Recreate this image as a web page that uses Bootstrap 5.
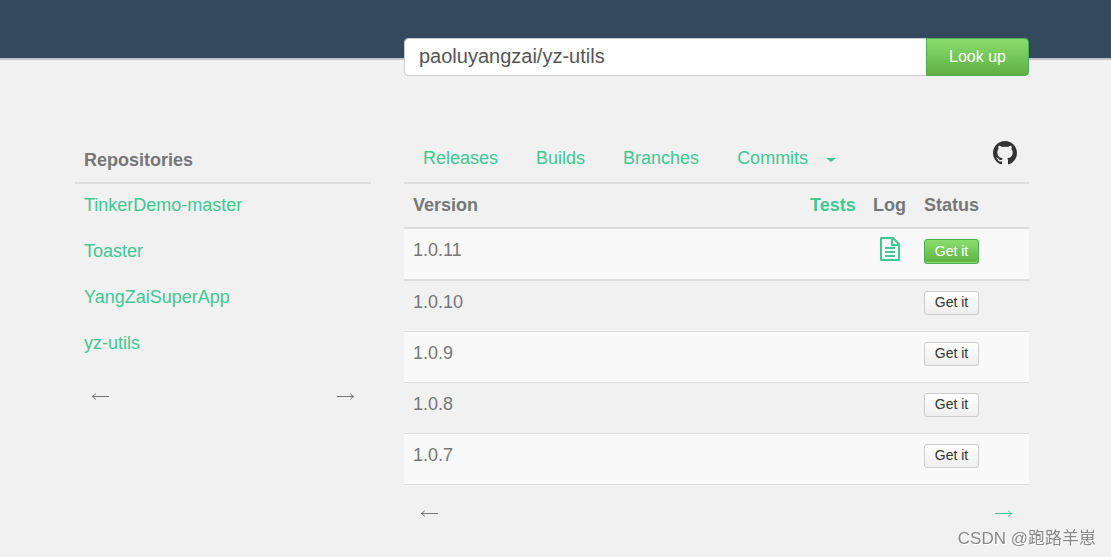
<!DOCTYPE html>
<html lang="en">
<head>
<meta charset="utf-8">
<meta name="viewport" content="width=device-width, initial-scale=1">
<title>paoluyangzai/yz-utils</title>
<link href="https://cdn.jsdelivr.net/npm/bootstrap@5.3.0/dist/css/bootstrap.min.css" rel="stylesheet">
<style>
  body { background: #f1f1f1; color: #777; font-family: "Liberation Sans", "Noto Sans CJK SC", sans-serif; font-size: 18px; line-height: 26px; }
  a { color: #41c793; text-decoration: none; }
  a:hover { color: #2a9d6f; }
  .topbar { height: 60px; background: #34495e; border-bottom: 2px solid #bdc3c7; }
  .page { padding: 0 82px 0 75px; }
  .columns { display: grid; grid-template-columns: 296fr 625fr; column-gap: 33px; }
  .lookup { grid-column: 2; margin-top: -22px; margin-bottom: 64px; }
  .lookup .form-control { height: 38px; padding: 0 14px 2px; font-size: 20px; color: #555; border-color: #ccc; border-radius: 4px; }
  .lookup .btn { width: 103px; height: 38px; padding: 0; font-size: 16px; border-radius: 4px; }
  .btn-go, .btn-go:hover { color: #fff; background: linear-gradient(#8add6d, #60b044); border-color: #4cae4c; }
  .btn-get { width: 55px; height: 24px; padding: 0 0 2px; font-size: 14px; line-height: 20px; border-radius: 3px; }
  .btn-go.btn-get { height: 25px; box-shadow: inset 0 -1px #8add6d; }
  .btn-plain, .btn-plain:hover { color: #333; background: linear-gradient(#fff, #eee); border-color: #ccc; }
  .heading { height: 44px; padding: 7px 9px; border-bottom: 2px solid #ddd; font-size: 18px; line-height: 26px; font-weight: 700; }
  .tabs { height: 44px; border-bottom: 2px solid #ddd; }
  .tabs .nav-link { color: #41c793; padding: 5px 19px; }
  .tabs .dropdown-toggle::after { margin-left: 18px; vertical-align: 2px; border-top-width: 4px; border-left-width: 5px; border-right-width: 5px; border-bottom: 0; }
  .repos li { height: 46px; padding: 8px 9px; }
  .versions { table-layout: fixed; width: 100%; }
  .versions th { height: 44px; padding: 8px 9px; border-bottom: 2px solid #ddd; vertical-align: top; }
  .versions td { height: 51px; padding: 8px 9px; border-bottom: 1px solid #ddd; vertical-align: top; }
  .versions .latest td { height: 52px; border-bottom-width: 2px; }
  .versions tbody tr:nth-child(odd) { background: #f9f9f9; }
  .versions td.icon-cell { padding-left: 15px; }
  .versions .btn-get { margin-top: 2px; }
  .col-tests { width: 63px; } .col-log { width: 51px; } .col-status { width: 114px; }
  .pager-row { padding: 24px 16px 0; }
  .pager-row svg { display: block; fill: none; stroke: currentColor; }
  .watermark { right: 15px; bottom: 5px; color: #888; text-shadow: 1px 1px #fff; font-size: 17px; }
</style>
</head>
<body>
<svg class="d-none">
  <symbol id="arrow-left" viewBox="0 0 18 8"><path d="M1 4.5H18M4.500 1.500Q3.500 4 1 4.500Q3.500 5 4.500 7.500"/></symbol>
  <symbol id="arrow-right" viewBox="0 0 18 8"><path d="M0 4.500H17M13.500 1.500Q14.500 4 17 4.500Q14.500 5 13.500 7.500"/></symbol>
</svg>
<header class="topbar"></header>
<main class="page">
  <div class="columns">
    <form class="lookup input-group position-relative">
      <input type="text" class="form-control shadow-none" aria-label="Repository" value="paoluyangzai/yz-utils">
      <button type="button" class="btn btn-go">Look up</button>
    </form>
    <aside>
      <h2 class="heading m-0">Repositories</h2>
      <ul class="repos list-unstyled mb-0">
        <li><a href="#">TinkerDemo-master</a></li>
        <li><a href="#">Toaster</a></li>
        <li><a href="#">YangZaiSuperApp</a></li>
        <li><a href="#">yz-utils</a></li>
      </ul>
      <div class="pager-row d-flex justify-content-between">
        <svg width="18" height="8"><use href="#arrow-left"/></svg>
        <svg width="18" height="8"><use href="#arrow-right"/></svg>
      </div>
    </aside>
    <section>
      <nav class="tabs nav">
        <a class="nav-link" href="#">Releases</a>
        <a class="nav-link" href="#">Builds</a>
        <a class="nav-link" href="#">Branches</a>
        <a class="nav-link dropdown-toggle" href="#">Commits</a>
        <a class="ms-auto me-2 pe-1" href="#" aria-label="GitHub">
          <svg class="d-block" width="24" height="25" viewBox="0 -.5 16 16.500" fill="#333"><path d="M8 0C3.58 0 0 3.58 0 8c0 3.54 2.29 6.53 5.47 7.59.4.07.55-.17.55-.38 0-.19-.01-.82-.01-1.49-2.01.37-2.53-.49-2.69-.94-.09-.23-.48-.94-.82-1.13-.28-.15-.68-.52-.01-.53.63-.01 1.08.58 1.23.82.72 1.21 1.87.87 2.33.66.07-.52.28-.87.51-1.07-1.78-.2-3.64-.89-3.64-3.95 0-.87.31-1.59.82-2.15-.08-.2-.36-1.02.08-2.12 0 0 .67-.21 2.2.82.64-.18 1.32-.27 2-.27s1.36.09 2 .27c1.53-1.04 2.2-.82 2.2-.82.44 1.1.16 1.92.08 2.12.51.56.82 1.27.82 2.15 0 3.07-1.87 3.75-3.65 3.95.29.25.54.73.54 1.48 0 1.07-.01 1.93-.01 2.2 0 .21.15.46.55.38A8.01 8.01 0 0 0 16 8c0-4.42-3.58-8-8-8z"/></svg>
        </a>
      </nav>
      <table class="versions">
        <colgroup><col><col class="col-tests"><col class="col-log"><col class="col-status"></colgroup>
        <thead><tr><th>Version</th><th><a href="#">Tests</a></th><th>Log</th><th>Status</th></tr></thead>
        <tbody>
          <tr class="latest"><td>1.0.11</td><td></td>
            <td class="icon-cell"><a href="#" aria-label="Build log"><svg class="d-block" width="22" height="24" viewBox="0 0 22 24" fill="none" stroke="#41c793" stroke-width="2"><path d="M2 1h12l6 6v16H2zM13 1v7h7M6 11h10M6 15h10M6 19h10" stroke-linejoin="round"/></svg></a></td>
            <td><button type="button" class="btn btn-go btn-get d-block">Get it</button></td></tr>
          <tr><td>1.0.10</td><td></td><td></td><td><button type="button" class="btn btn-plain btn-get d-block">Get it</button></td></tr>
          <tr><td>1.0.9</td><td></td><td></td><td><button type="button" class="btn btn-plain btn-get d-block">Get it</button></td></tr>
          <tr><td>1.0.8</td><td></td><td></td><td><button type="button" class="btn btn-plain btn-get d-block">Get it</button></td></tr>
          <tr><td>1.0.7</td><td></td><td></td><td><button type="button" class="btn btn-plain btn-get d-block">Get it</button></td></tr>
        </tbody>
      </table>
      <div class="pager-row d-flex justify-content-between">
        <svg width="18" height="8"><use href="#arrow-left"/></svg>
        <a href="#" aria-label="Next page"><svg width="18" height="8"><use href="#arrow-right"/></svg></a>
      </div>
    </section>
  </div>
</main>
<div class="watermark position-fixed">CSDN @跑路羊崽</div>
<script src="https://cdn.jsdelivr.net/npm/bootstrap@5.3.0/dist/js/bootstrap.bundle.min.js"></script>
</body>
</html>
